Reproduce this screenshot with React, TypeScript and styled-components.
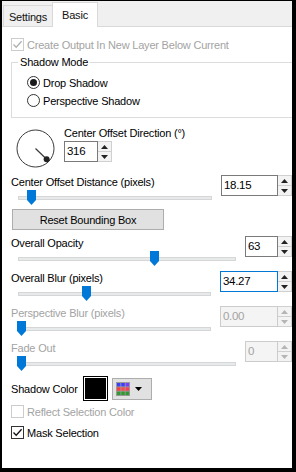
import React from "react";
import styled, { createGlobalStyle } from "styled-components";

const Global = createGlobalStyle`
  html, body { margin: 0; padding: 0; background: #000; }
  body { font-family: "Liberation Sans", Arial, sans-serif; font-size: 11px; color: #000; }
  * { box-sizing: border-box; }
`;

const Frame = styled.div`
  width: 296px;
  height: 472px;
  border-style: solid;
  border-color: #000;
  border-width: 1px 4px 4px 2px;
  background: #f0f0f0;
  display: flex;
  flex-direction: column;
  overflow: hidden;
  letter-spacing: -0.2px;
`;

const TabStrip = styled.div`
  height: 25px;
  flex: none;
  display: flex;
  align-items: flex-end;
  padding-left: 1px;
  position: relative;
  z-index: 1;
`;

const Tab = styled.div<{ $active?: boolean }>`
  height: ${(p) => (p.$active ? 25 : 21)}px;
  width: ${(p) => (p.$active ? 46 : 50)}px;
  margin-bottom: ${(p) => (p.$active ? -1 : 0)}px;
  margin-left: ${(p) => (p.$active ? -1 : 0)}px;
  border: 1px solid #d9d9d9;
  border-bottom: none;
  background: ${(p) => (p.$active ? "#fff" : "#f0f0f0")};
  display: flex;
  align-items: center;
  justify-content: center;
  padding-top: ${(p) => (p.$active ? 0 : 2)}px;
  font-size: 11px;
  color: #111;
`;

const Panel = styled.div`
  flex: 1;
  background: #fff;
  border-top: 1px solid #d9d9d9;
  padding-left: 9px;
  display: flex;
  flex-direction: column;
  overflow: hidden;
`;

const CheckRow = styled.label<{ $mt: number; $disabled?: boolean }>`
  display: flex;
  align-items: center;
  height: 13px;
  margin-top: ${(p) => p.$mt}px;
  color: ${(p) => (p.$disabled ? "#a3a3a3" : "#000")};
  white-space: nowrap;
`;

const Box = styled.span<{ $disabled?: boolean }>`
  width: 13px;
  height: 13px;
  flex: none;
  border: 1px solid ${(p) => (p.$disabled ? "#cccccc" : "#333")};
  background: #fff;
  display: flex;
  align-items: center;
  justify-content: center;
  margin-right: 3px;
`;

const Round = styled.span`
  width: 13px;
  height: 13px;
  flex: none;
  border-radius: 50%;
  border: 1px solid #333;
  background: #fff;
  display: flex;
  align-items: center;
  justify-content: center;
  margin-right: 3px;
`;

const Dot = styled.span`
  width: 7px;
  height: 7px;
  border-radius: 50%;
  background: #1a1a1a;
`;

const GroupBox = styled.div`
  margin-top: 11px;
  margin-right: -6px;
  border: 1px solid #dcdcdc;
  position: relative;
  padding: 13px 0 10px 15px;
  display: flex;
  flex-direction: column;
  gap: 5px;
`;

const Legend = styled.span`
  position: absolute;
  top: -8px;
  left: 6px;
  line-height: 14px;
  padding: 0 2px;
  background: #fff;
`;

const DialRow = styled.div`
  display: flex;
  margin-top: 8px;
`;

const DialSvg = styled.svg`
  margin-left: 5px;
  margin-top: 3px;
  flex: none;
`;

const DialCol = styled.div`
  margin-left: 9px;
  display: flex;
  flex-direction: column;
`;

const Label = styled.div<{ $disabled?: boolean }>`
  line-height: 14px;
  height: 14px;
  white-space: nowrap;
  color: ${(p) => (p.$disabled ? "#a3a3a3" : "#000")};
`;

const SpinWrap = styled.div<{ $mt?: number }>`
  display: flex;
  height: 21px;
  flex: none;
  margin-top: ${(p) => p.$mt ?? 0}px;
`;

const SpinInput = styled.div<{ $w: number; $focus?: boolean; $disabled?: boolean }>`
  width: ${(p) => p.$w}px;
  height: 21px;
  border: 1px solid
    ${(p) => (p.$focus ? "#0078d7" : p.$disabled ? "#cccccc" : "#7a7a7a")};
  background: ${(p) => (p.$disabled ? "#f4f4f4" : "#fff")};
  color: ${(p) => (p.$disabled ? "#a3a3a3" : "#000")};
  padding-left: 2px;
  line-height: 19px;
  font-size: 11.5px;
  letter-spacing: -0.3px;
`;

const Arrows = styled.div`
  width: 14px;
  display: flex;
  flex-direction: column;
  border: 1px solid #d0d0d0;
  border-left: none;
`;

const ArrowBtn = styled.div<{ $bottom?: boolean }>`
  flex: 1;
  background: #f3f3f3;
  border-top: ${(p) => (p.$bottom ? "1px solid #d0d0d0" : "none")};
  display: flex;
  align-items: center;
  justify-content: center;
`;

const Block = styled.div<{ $mt: number }>`
  display: flex;
  align-items: flex-start;
  margin-top: ${(p) => p.$mt}px;
`;

const BlockLeft = styled.div`
  flex: 1;
  display: flex;
  flex-direction: column;
  margin-right: 9px;
`;

const Slider = styled.div`
  position: relative;
  height: 15px;
  margin-top: 1px;
  margin-left: 7px;
`;

const Track = styled.div`
  position: absolute;
  left: 0;
  right: 0;
  top: 6px;
  height: 4px;
  background: #e7eaea;
  border: 1px solid #d6d6d6;
`;

const Thumb = styled.svg<{ $x: number }>`
  position: absolute;
  top: 0;
  left: ${(p) => p.$x}px;
`;

const Button = styled.div`
  margin-top: 4px;
  margin-left: 1px;
  width: 152px;
  height: 21px;
  border: 1px solid #adadad;
  background: #e1e1e1;
  display: flex;
  align-items: center;
  justify-content: center;
`;

const ColorRow = styled.div`
  display: flex;
  align-items: center;
  margin-top: 5px;
  height: 25px;
`;

const ColorLabel = styled.div`
  width: 72px;
  white-space: nowrap;
`;

const Swatch = styled.div<{ $color: string }>`
  width: 25px;
  height: 25px;
  border: 1px solid #000;
  box-shadow: inset 0 0 0 1px #fff;
  background: ${(p) => p.$color};
`;

const Picker = styled.div`
  margin-left: 4px;
  width: 40px;
  height: 22px;
  border: 1px solid #adadad;
  background: #e1e1e1;
  display: flex;
  align-items: center;
  padding-left: 3px;
  gap: 5px;
`;

const Check = ({ color }: { color: string }) => (
  <svg width="11" height="11" viewBox="0 0 11 11">
    <path d="M1.5 5.5 L4.2 8.3 L9.6 2.2" fill="none" stroke={color} strokeWidth="1.3" />
  </svg>
);

const Tri = ({ up, color }: { up?: boolean; color: string }) => (
  <svg width="7" height="4" viewBox="0 0 7 4">
    <polygon points={up ? "0,4 7,4 3.5,0" : "0,0 7,0 3.5,4"} fill={color} />
  </svg>
);

const Spin = ({
  value,
  w,
  focus,
  disabled,
  mt,
}: {
  value: string;
  w: number;
  focus?: boolean;
  disabled?: boolean;
  mt?: number;
}) => {
  const c = disabled ? "#b5b5b5" : "#222";
  return (
    <SpinWrap $mt={mt}>
      <SpinInput $w={w} $focus={focus} $disabled={disabled}>
        {value}
      </SpinInput>
      <Arrows>
        <ArrowBtn>
          <Tri up color={c} />
        </ArrowBtn>
        <ArrowBtn $bottom>
          <Tri color={c} />
        </ArrowBtn>
      </Arrows>
    </SpinWrap>
  );
};

const SliderBlock = ({
  label,
  value,
  w,
  thumb,
  mt,
  focus,
  disabled,
}: {
  label: string;
  value: string;
  w: number;
  thumb: number;
  mt: number;
  focus?: boolean;
  disabled?: boolean;
}) => (
  <Block $mt={mt}>
    <BlockLeft>
      <Label $disabled={disabled}>{label}</Label>
      <Slider>
        <Track />
        <Thumb $x={thumb} width="9" height="15" viewBox="0 0 9 15">
          <polygon points="0,0 9,0 9,10 4.5,15 0,10" fill="#0078d7" />
        </Thumb>
      </Slider>
    </BlockLeft>
    <Spin value={value} w={w} focus={focus} disabled={disabled} />
  </Block>
);

const gridColors = [
  "#3c3cff", "#3c3cff", "#7a3cff",
  "#ff3c3c", "#ff4a4a", "#ff3c5a",
  "#2f9a2f", "#2f9a2f", "#2f9a2f",
];

export default function App() {
  const ang = (44 * Math.PI) / 180;
  const ex = 19.5 + 15.5 * Math.cos(ang);
  const ey = 19.5 + 15.5 * Math.sin(ang);
  return (
    <>
      <Global />
      <Frame>
        <TabStrip>
          <Tab>Settings</Tab>
          <Tab $active>Basic</Tab>
        </TabStrip>
        <Panel>
          <CheckRow $mt={11} $disabled>
            <Box $disabled>
              <Check color="#b0b0b0" />
            </Box>
            Create Output In New Layer Below Current
          </CheckRow>
          <GroupBox>
            <Legend>Shadow Mode</Legend>
            <CheckRow $mt={0}>
              <Round>
                <Dot />
              </Round>
              Drop Shadow
            </CheckRow>
            <CheckRow $mt={0}>
              <Round />
              Perspective Shadow
            </CheckRow>
          </GroupBox>
          <DialRow>
            <DialSvg width="39" height="39" viewBox="0 0 39 39">
              <circle cx="19.5" cy="19.5" r="18.5" fill="#fff" stroke="#3a3a3a" strokeWidth="1" />
              <line x1="19.5" y1="19.5" x2={ex} y2={ey} stroke="#3a3a3a" strokeWidth="1.2" />
              <circle cx={ex} cy={ey} r="3" fill="#222" />
            </DialSvg>
            <DialCol>
              <Label>Center Offset Direction (°)</Label>
              <Spin value="316" w={34} mt={1} />
            </DialCol>
          </DialRow>
          <SliderBlock mt={7} label="Center Offset Distance (pixels)" value="18.15" w={57} thumb={9} />
          <Button>Reset Bounding Box</Button>
          <SliderBlock mt={6} label="Overall Opacity" value="63" w={33} thumb={132} />
          <SliderBlock mt={5} label="Overall Blur (pixels)" value="34.27" w={58} thumb={64} focus />
          <SliderBlock mt={5} label="Perspective Blur (pixels)" value="0.00" w={58} thumb={-1} disabled />
          <SliderBlock mt={5} label="Fade Out" value="0" w={33} thumb={-1} disabled />
          <ColorRow>
            <ColorLabel>Shadow Color</ColorLabel>
            <Swatch $color="#000" />
            <Picker>
              <svg width="14" height="14" viewBox="0 0 14 14">
                <rect x="0" y="0" width="14" height="14" fill="#9a9a9a" />
                {gridColors.map((c, i) => (
                  <rect
                    key={i}
                    x={1 + (i % 3) * 4.33}
                    y={1 + Math.floor(i / 3) * 4.33}
                    width="3.4"
                    height="3.4"
                    fill={c}
                  />
                ))}
              </svg>
              <svg width="7" height="4" viewBox="0 0 7 4">
                <polygon points="0,0 7,0 3.5,4" fill="#000" />
              </svg>
            </Picker>
          </ColorRow>
          <CheckRow $mt={4} $disabled>
            <Box $disabled />
            Reflect Selection Color
          </CheckRow>
          <CheckRow $mt={8}>
            <Box>
              <Check color="#111" />
            </Box>
            Mask Selection
          </CheckRow>
        </Panel>
      </Frame>
    </>
  );
}
